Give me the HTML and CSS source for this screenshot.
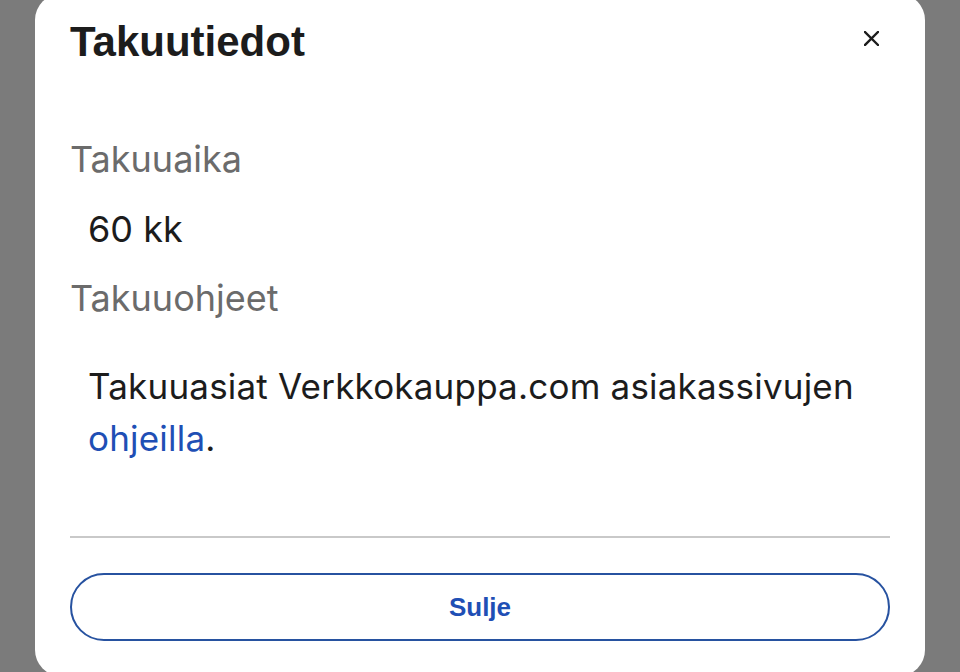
FILE: index.html
```html
<!DOCTYPE html>
<html lang="fi">
<head>
  <meta charset="UTF-8" />
  <meta name="viewport" content="width=device-width, initial-scale=1.0"/>
  <title>Takuutiedot</title>
  <link rel="stylesheet" href="styles.css">
</head>
<body>
  <div class="modal">
    <div class="modal-header">
      <h2 class="modal-title">Takuutiedot</h2>
      <button class="close-btn" aria-label="Sulje">
        <svg width="15" height="15" viewBox="0 0 15 15">
          <path d="M1 1 L14 14 M14 1 L1 14" stroke="#1c1c1c" stroke-width="2.4" stroke-linecap="square" fill="none"/>
        </svg>
      </button>
    </div>

    <div class="label label-first">Takuuaika</div>
    <div class="value">60 kk</div>

    <div class="label">Takuuohjeet</div>
    <p class="info">Takuuasiat Verkkokauppa.com asiakassivujen <a href="#">ohjeilla</a>.</p>

    <hr class="divider">

    <button class="close-main">Sulje</button>
  </div>
</body>
</html>
```

FILE: styles.css
```css
body {
  margin: 0;
  background-color: #7b7b7b;
  font-family: Inter, "Noto Sans", sans-serif;
  overflow: hidden;
}
.modal {
  margin: -6px 35px 0 35px;
  height: 682px;
  padding: 23px 35px 0 35px;
  background: #fff;
  border-radius: 26px;
  box-sizing: border-box;
}
.modal-header {
  display: flex;
  justify-content: space-between;
  align-items: flex-start;
}
.modal-title {
  margin: 0;
  font-family: "Liberation Sans", Arial, sans-serif;
  font-weight: bold;
  font-size: 42px;
  line-height: 49px;
  color: #1c1c1c;
}
.close-btn {
  width: 24px;
  height: 24px;
  margin: 9px 7px 0 0;
  padding: 0;
  border: none;
  background: none;
  display: flex;
  align-items: center;
  justify-content: center;
  cursor: pointer;
}
.label {
  margin-top: 25px;
  font-size: 36px;
  line-height: 44px;
  color: #6b6b6b;
}
.label-first {
  margin-top: 71px;
}
.value {
  margin-top: 26px;
  padding-left: 18px;
  font-size: 36px;
  line-height: 44px;
  color: #1c1c1c;
}
.info {
  margin: 40px 0 0 0;
  padding-left: 18px;
  font-size: 35px;
  letter-spacing: 0.2px;
  line-height: 52px;
  color: #1c1c1c;
}
.info a {
  color: #1f4fb5;
  text-decoration: none;
}
.divider {
  margin: 72px 0 0 0;
  border: none;
  border-top: 2px solid #c9c9c9;
}
.close-main {
  display: block;
  width: 100%;
  height: 68px;
  margin-top: 35px;
  border: 2px solid #2752a0;
  border-radius: 34px;
  background: #fff;
  font-family: "Liberation Sans", Arial, sans-serif;
  font-weight: bold;
  font-size: 26px;
  color: #1f4fb5;
  cursor: pointer;
}
```
